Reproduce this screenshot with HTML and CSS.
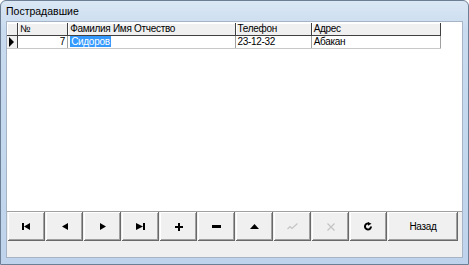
FILE: index.html
```html
<!DOCTYPE html>
<html lang="ru">
<head>
    <meta charset="UTF-8">
    <title>Пострадавшие</title>
    <link rel="stylesheet" href="styles.css">
</head>
<body>
    <div class="window">
        <div class="titlebar">Пострадавшие</div>
        <div class="client">
            <div class="grid">
                <table>
                    <tr class="head">
                        <td class="ind"></td>
                        <td class="c-num">№</td>
                        <td class="c-fio">Фамилия Имя Отчество</td>
                        <td class="c-tel">Телефон</td>
                        <td class="c-adr">Адрес</td>
                    </tr>
                    <tr>
                        <td class="ind"><span class="arrow"></span></td>
                        <td class="num">7</td>
                        <td><span class="sel">Сидоров</span></td>
                        <td>23-12-32</td>
                        <td>Абакан</td>
                    </tr>
                </table>
            </div>
            <div class="navbar">
                <button><svg width="9" height="7" viewBox="0 0 9 7"><rect x="0" y="0" width="2" height="7"/><path d="M2 3.5 L8 0 L8 7 Z"/></svg></button>
                <button><svg width="6" height="7" viewBox="0 0 6 7"><path d="M0 3.5 L6 0 L6 7 Z"/></svg></button>
                <button><svg width="6" height="7" viewBox="0 0 6 7"><path d="M6 3.5 L0 0 L0 7 Z"/></svg></button>
                <button><svg width="9" height="7" viewBox="0 0 9 7"><path d="M7 3.5 L0 0 L0 7 Z"/><rect x="7" y="0" width="2" height="7"/></svg></button>
                <button><svg width="8" height="8" viewBox="0 0 8 8"><rect x="3" y="0" width="2" height="8"/><rect x="0" y="3" width="8" height="2"/></svg></button>
                <button><svg width="9" height="3" viewBox="0 0 9 3"><rect x="0" y="0" width="9" height="3"/></svg></button>
                <button><svg width="9" height="5" viewBox="0 0 9 5"><path d="M4.5 0 L9 5 L0 5 Z"/></svg></button>
                <button class="off"><svg width="11" height="7" viewBox="0 0 11 7"><path d="M0.5 6 L3 3.5 L5 5.5 L10.5 0.5" fill="none" stroke="#c4c4c4" stroke-width="1.2"/></svg></button>
                <button class="off"><svg width="8" height="8" viewBox="0 0 8 8"><path d="M0.5 0.5 L7.5 7.5 M7.5 0.5 L0.5 7.5" stroke="#c4c4c4" stroke-width="1.3"/></svg></button>
                <button><svg width="9" height="9" viewBox="0 0 9 9"><path d="M7 4.5 A3 3 0 1 1 4.5 1.5" fill="none" stroke="#000" stroke-width="2"/><path d="M4 0 L7.5 1.8 L4 3.8 Z"/></svg></button>
                <button class="back">Назад</button>
            </div>
            <div class="status"></div>
        </div>
    </div>
</body>
</html>
```

FILE: styles.css
```css
body {
    margin: 0;
    background-color: #ffffff;
    font-family: "Liberation Sans", Arial, sans-serif;
    font-size: 10px;
}
.window {
    width: 467px;
    height: 263px;
    border: 1px solid #6d7f95;
    border-radius: 6px 6px 0 0;
    background: linear-gradient(#dbe7f4, #c8dbef 30px, #bfd4ec);
    display: flex;
    flex-direction: column;
}
.titlebar {
    height: 20px;
    padding: 4px 0 0 5px;
    box-sizing: border-box;
    font-size: 10.5px;
    color: #000;
}
.client {
    margin: 0 5px 6px 5px;
    border: 1px solid #a6b4c6;
    background-color: #f0f0f0;
    flex: 1;
    display: flex;
    flex-direction: column;
}
.grid {
    height: 190px;
    background-color: #ffffff;
    border-bottom: 1px solid #a0a0a0;
    padding: 1px 0 0 0;
    box-sizing: border-box;
}
table {
    border-collapse: collapse;
    table-layout: fixed;
    width: 434px;
}
td {
    height: 12px;
    padding: 0 2px;
    border-right: 1px solid #a0a0a0;
    border-bottom: 1px solid #c8c8c8;
    white-space: nowrap;
    overflow: hidden;
    line-height: 12px;
    font-size: 10px;
    letter-spacing: -0.3px;
    color: #000;
}
.head td {
    background-color: #f0f0f0;
    border-bottom: 1px solid #404040;
    border-right: 1px solid #404040;
    box-shadow: inset 1px 1px 0 #ffffff;
}
.ind {
    width: 6px;
    background-color: #f0f0f0;
    border-right: 1px solid #404040;
}
.c-num { width: 45px; }
.c-fio { width: 162px; }
.c-tel { width: 71px; }
.c-adr { width: 124px; }
.num {
    text-align: right;
}
.sel {
    background-color: #3399ff;
    color: #ffffff;
    padding: 0 1px;
}
.arrow {
    display: block;
    width: 0;
    height: 0;
    border-top: 5px solid transparent;
    border-bottom: 5px solid transparent;
    border-left: 5px solid #000;
}
.navbar {
    display: flex;
    gap: 1px;
    height: 29px;
    padding: 0 0 0 1px;
}
.navbar button {
    width: 37px;
    height: 29px;
    border: none;
    background-color: #f0f0f0;
    box-shadow: inset -1px -1px 0 #696969, inset 1px 1px 0 #ffffff, inset -2px -2px 0 #a0a0a0;
    display: flex;
    align-items: center;
    justify-content: center;
    padding: 0;
    font-family: "Liberation Sans", Arial, sans-serif;
    font-size: 10px;
    letter-spacing: -0.3px;
    color: #000;
}
.navbar button.back {
    width: 70px;
}
.status {
    flex: 1;
}
```
